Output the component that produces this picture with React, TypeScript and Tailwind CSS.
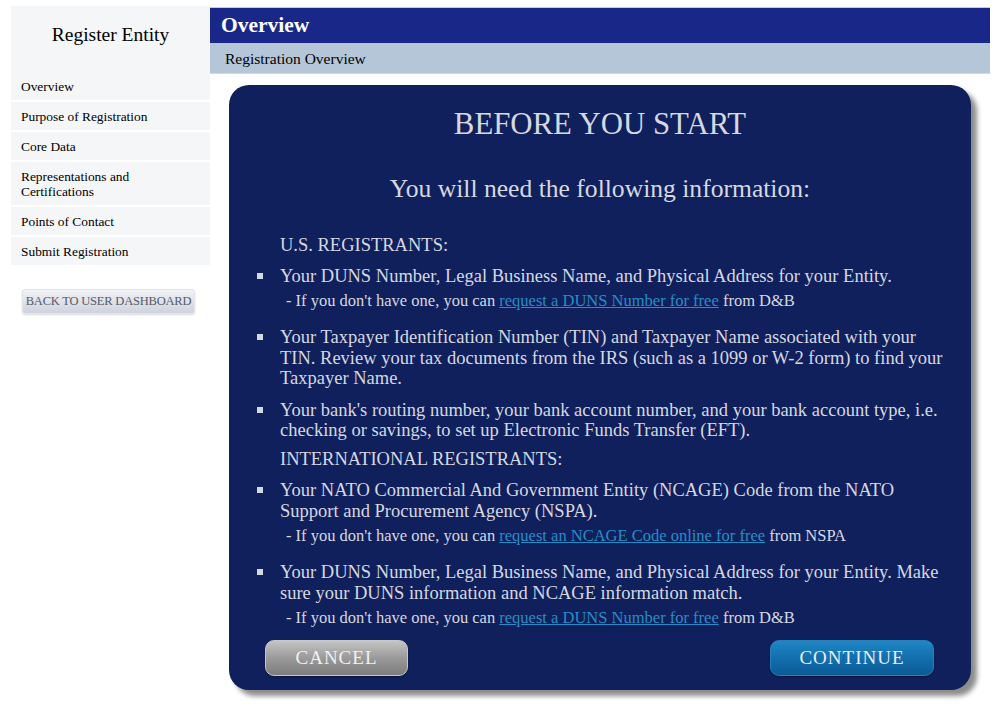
import React from "react";

const navItems = [
  "Overview",
  "Purpose of Registration",
  "Core Data",
  "Representations and Certifications",
  "Points of Contact",
  "Submit Registration",
];

function Bullet({ children, sub }: { children: React.ReactNode; sub?: React.ReactNode }) {
  return (
    <li className="relative">
      <span className="absolute left-[-23px] top-[7px] h-[6px] w-[6px] bg-[#d6d8e0]" />
      <p className="text-[18.5px] leading-[20.4px]">{children}</p>
      {sub && <p className="mb-[5px] ml-[6px] mt-[5px] text-[16.5px] leading-[20px]">{sub}</p>}
    </li>
  );
}

function DunsLink({ text }: { text: string }) {
  return (
    <a href="#" className="text-[#2a8cc6] underline">
      {text}
    </a>
  );
}

export default function App() {
  return (
    <div
      className="flex min-h-[718px] w-[1000px] bg-white text-black"
      style={{ fontFamily: '"Liberation Serif", "Times New Roman", serif' }}
    >
      {/* Sidebar */}
      <aside className="ml-[11px] mt-[6px] w-[199px] shrink-0">
        <div className="flex h-[66px] items-center justify-center bg-[#f5f6f8] pb-[8px] text-[19.5px]">
          Register Entity
        </div>
        <ul className="flex flex-col gap-[2px]">
          {navItems.map((item) => (
            <li
              key={item}
              className="flex min-h-[28px] items-center bg-[#f5f6f8] py-[6.5px] pl-[10px] pr-[10px] text-[13.4px] leading-[15px]"
            >
              {item}
            </li>
          ))}
        </ul>
        <button className="ml-[11px] mt-[24px] h-[25px] w-[173px] rounded-[3px] border border-[#e2e4ea] bg-gradient-to-b from-[#f2f3f7] via-[#dfe2ea] to-[#cfd3de] text-[12.5px] tracking-[-0.2px] text-[#555a66] shadow-[0_1px_2px_rgba(0,0,0,0.15)]">
          BACK TO USER DASHBOARD
        </button>
      </aside>

      {/* Main */}
      <main className="mt-[7px] w-[780px] shrink-0">
        <div className="flex h-[36px] items-center border-t border-[#c9ccd8] bg-[#192788] pl-[11px] text-[21.5px] font-bold text-white">
          Overview
        </div>
        <div className="flex h-[31px] items-center border-b border-[#d2dae4] bg-[#b5c6d8] pl-[15px] pt-[1px] text-[15.5px]">
          Registration Overview
        </div>

        <section className="ml-[19px] mt-[11px] h-[605px] w-[742px] rounded-[20px] bg-[#10205c] pl-[51px] pr-[26px] pt-[22px] text-[#d6d8e0] shadow-[6px_6px_5px_rgba(0,0,0,0.45)]">
          <h1 className="-ml-[25px] text-center text-[30.8px] leading-[34px]">BEFORE YOU START</h1>
          <h2 className="-ml-[25px] mt-[34px] text-center text-[25.6px] leading-[28px]">
            You will need the following information:
          </h2>

          <p className="mt-[31px] text-[18.5px] leading-[22px]">U.S. REGISTRANTS:</p>
          <ul className="mt-[10px] flex flex-col gap-[11px]">
            <Bullet
              sub={
                <>
                  - If you don't have one, you can <DunsLink text="request a DUNS Number for free" /> from D&amp;B
                </>
              }
            >
              Your DUNS Number, Legal Business Name, and Physical Address for your Entity.
            </Bullet>
            <Bullet>
              Your Taxpayer Identification Number (TIN) and Taxpayer Name associated with your TIN. Review your tax
              documents from the IRS (such as a 1099 or W-2 form) to find your Taxpayer Name.
            </Bullet>
            <Bullet>
              Your bank's routing number, your bank account number, and your bank account type, i.e. checking or
              savings, to set up Electronic Funds Transfer (EFT).
            </Bullet>
          </ul>

          <p className="mt-[8px] text-[18.5px] leading-[22px]">INTERNATIONAL REGISTRANTS:</p>
          <ul className="mt-[10px] flex flex-col gap-[11px]">
            <Bullet
              sub={
                <>
                  - If you don't have one, you can <DunsLink text="request an NCAGE Code online for free" /> from NSPA
                </>
              }
            >
              Your NATO Commercial And Government Entity (NCAGE) Code from the NATO Support and Procurement Agency
              (NSPA).
            </Bullet>
            <Bullet
              sub={
                <>
                  - If you don't have one, you can <DunsLink text="request a DUNS Number for free" /> from D&amp;B
                </>
              }
            >
              Your DUNS Number, Legal Business Name, and Physical Address for your Entity. Make sure your DUNS
              information and NCAGE information match.
            </Bullet>
          </ul>

          <div className="-ml-[15px] mr-[11px] mt-[7px] flex justify-between">
            <button className="h-[36px] w-[143px] rounded-[9px] border border-[#c8c8c8] bg-gradient-to-b from-[#c4c4c4] via-[#9a9a9a] to-[#7c7c7c] text-[19px] tracking-[1px] text-[#f0f0f0] shadow-[0_1px_2px_rgba(0,0,0,0.4)]">
              CANCEL
            </button>
            <button className="h-[36px] w-[164px] rounded-[9px] border border-[#2b7fb8] bg-gradient-to-b from-[#1f86c4] via-[#136fae] to-[#0b5a96] text-[19px] tracking-[1px] text-[#e8eef5] shadow-[0_1px_2px_rgba(0,0,0,0.4)]">
              CONTINUE
            </button>
          </div>
        </section>
      </main>
    </div>
  );
}
